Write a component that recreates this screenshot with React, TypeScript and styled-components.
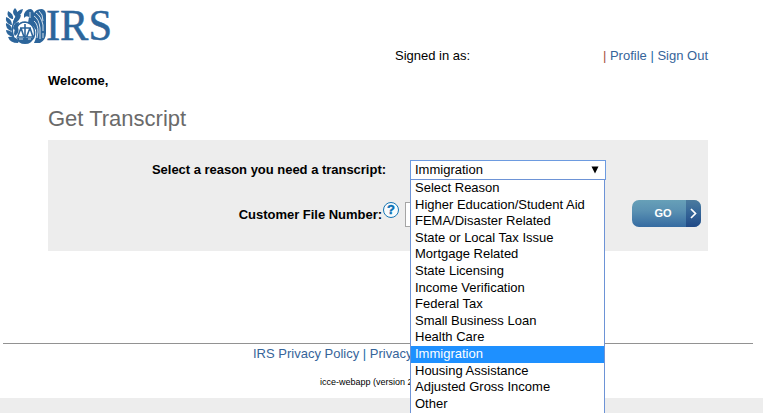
import React from 'react'
import styled, {createGlobalStyle} from 'styled-components'

const GlobalStyle = createGlobalStyle`
    * {
        box-sizing: border-box;
    }

    body {
        margin: 0;
        background: #fff;
        color: #000;
        font: 13px/16px 'Liberation Sans', Arial, sans-serif;
        overflow: hidden;
    }
`

const reasons = [
    'Select Reason',
    'Higher Education/Student Aid',
    'FEMA/Disaster Related',
    'State or Local Tax Issue',
    'Mortgage Related',
    'State Licensing',
    'Income Verification',
    'Federal Tax',
    'Small Business Loan',
    'Health Care',
    'Immigration',
    'Housing Assistance',
    'Adjusted Gross Income',
    'Other',
]

const Page = styled.div`
    display: flex;
    flex-direction: column;
    height: 413px;
`

const Header = styled.header`
    height: 47px;
    padding: 6px 0 0 4px;

    svg {
        display: block;
        overflow: visible;
    }
`

const Main = styled.main`
    width: 660px;
    height: 296px;
    margin-left: 48px;
`

const Account = styled.div`
    display: flex;
    justify-content: space-between;
    height: 26px;
    padding: 1px 0 0 347px;
`

const Link = styled.a`
    color: #36649a;
`

const Divider = styled.span<{$color?: string}>`
    color: ${({$color}) => $color || '#1b6ca8'};
`

const Welcome = styled.div`
    height: 33px;
    font-weight: bold;
`

const Title = styled.h1`
    height: 34px;
    margin: 0;
    color: #6a6a6a;
    font-size: 22px;
    font-weight: normal;
    line-height: 25px;
`

const Panel = styled.form`
    height: 111px;
    padding-top: 19px;
    background: #ededed;
`

const Row = styled.div<{$height: number}>`
    display: flex;
    align-items: flex-start;
    height: ${({$height}) => $height}px;
`

const Label = styled.label<{$width: number; $offset?: number}>`
    width: ${({$width}) => $width}px;
    padding-top: ${({$offset = 3}) => $offset}px;
    font-weight: bold;
    letter-spacing: -0.02px;
    text-align: right;
    white-space: nowrap;
`

const Select = styled.div`
    position: relative;
    width: 196px;
    height: 20px;
    margin: 1px 0 0 24px;
    padding: 1px 6px 0 4px;
    display: flex;
    justify-content: space-between;
    border: 1px solid #6d9be0;
    background: #fff;

    svg {
        margin-top: 4px;
    }
`

const Options = styled.ul`
    position: absolute;
    z-index: 1;
    top: 18px;
    left: -1px;
    width: 195px;
    height: 236px;
    margin: 0;
    padding: 0;
    border: 1px solid #6d93d6;
    border-bottom: 0;
    background: #fff;
    list-style: none;
`

const Option = styled.li<{$selected: boolean}>`
    height: 16.6px;
    padding-left: 4px;
    background: ${({$selected}) => ($selected ? '#1e90ff' : '#fff')};
    color: ${({$selected}) => ($selected ? '#fff' : '#000')};
    line-height: 16.6px;
    white-space: nowrap;
`

const Help = styled.span`
    display: flex;
    align-items: center;
    justify-content: center;
    width: 16px;
    height: 16px;
    margin: 0 6px 0 1px;
    border: 1px solid #1575b5;
    border-radius: 50%;
    background: #f7fbfd;
    color: #0870b5;
    font-size: 13px;
    font-weight: bold;
    -webkit-text-stroke: 0.4px #0870b5;
`

const FileNumber = styled.input`
    width: 150px;
    height: 25px;
    border: 1px solid #a5a5a5;
    background: #fff;
`

const GoButton = styled.button`
    display: flex;
    align-items: center;
    width: 69px;
    height: 27px;
    margin: -2px 7px 0 auto;
    padding: 0;
    overflow: hidden;
    border: 0;
    border-radius: 7px;
    background: linear-gradient(#67a0b8, #5a91b2 40%, #356ba1);
    color: #fff;
    font: bold 11px/27px 'Liberation Sans', Arial, sans-serif;
`

const GoText = styled.span`
    width: 54px;
    padding-left: 8px;
    text-align: center;
`

const GoArrow = styled.span`
    display: flex;
    align-items: center;
    justify-content: center;
    width: 15px;
    height: 27px;
    background: linear-gradient(#4c7b9e, #38699a 40%, #204986);
`

const Footer = styled.footer`
    width: 750px;
    height: 55px;
    margin-left: 3px;
    border-top: 1px solid #929292;
`

const FooterLinks = styled.nav`
    padding: 2px 0 0 250px;
    white-space: nowrap;
`

const Version = styled.div`
    padding: 14px 0 0 317px;
    font-size: 9px;
    line-height: 12px;
    white-space: nowrap;
`

const BottomBar = styled.div`
    flex: 1;
    background: #ededed;
`

const Logo = () => (
    <svg width="120" height="40" viewBox="4 6 120 40" role="img" aria-label="IRS">
        <g fill="#2c659b">
            {/* laurel */}
            <path d="M15 16Q11 12 15 8Q19 12 16 16ZM12 19Q6 17 8 11Q14 14 13 19ZM15 16Q17 10 23 9Q22 15 16 18ZM11 25Q5 23 6 17Q12 19 12 25ZM13 22Q14 16 21 15Q20 21 14 24ZM11 31Q5 28 6 23Q12 25 12 30ZM13 28Q14 22 19 22Q19 27 14 30ZM13 37Q6 35 6 30Q12 30 14 36ZM14 34Q14 28 18 27Q20 33 15 36ZM18 43Q10 43 8 37Q15 36 19 41Z" />
            {/* wing */}
            <path d="M34 13Q36 9 42 9Q46 10 46 15V33Q46 40 40 43H34Q37 37 36 30L31 23Q32 18 34 13Z" />
            {/* head and breast */}
            <path d="M24 14Q26 9 31 9Q35 11 34 17L33 26L28 23L29 17Q26 15 24 18Z" />
            <path d="M17 38H33Q32 44 25 44Q18 44 17 38Z" />
        </g>
        <g fill="none" stroke="#2c659b" strokeWidth="1.6">
            <path d="M15 41Q10 31 14 22Q16 15 21 11" />
            <path d="M17 27Q20 22 25 22Q32 23 34 29Q36 36 32 40M25 24V40M20 28H31M21 28L17.5 37H24L21 28M30 28L26.5 37H33L30 28" />
        </g>
        <g fill="none" stroke="#fff" strokeWidth="0.8">
            <path d="M39 11Q43 14 43 21M36 13Q41 16 43 25V31M34 16Q39 19 40 28V39M34 21Q38 24 38 32L37 38M43 33V38M30 12V18M19 39H23M28 39H31" />
        </g>
        <text
            x="46"
            y="40"
            fill="#2c659b"
            stroke="#2c659b"
            strokeWidth="0.5"
            fontFamily="Liberation Serif, serif"
            fontSize="45"
            textLength="66"
            lengthAdjust="spacingAndGlyphs">
            IRS
        </text>
    </svg>
)

export default function App() {
    const selected = 'Immigration'

    return (
        <>
            <GlobalStyle />
            <Page>
                <Header>
                    <Logo />
                </Header>
                <Main>
                    <Account>
                        <span>Signed in as:</span>
                        <span>
                            <Divider $color="#a8543c">|</Divider> <Link>Profile</Link> <Divider>|</Divider>{' '}
                            <Link>Sign Out</Link>
                        </span>
                    </Account>
                    <Welcome>Welcome,</Welcome>
                    <Title>Get Transcript</Title>
                    <Panel>
                        <Row $height={43}>
                            <Label $width={338}>Select a reason you need a transcript:</Label>
                            <Select>
                                <span>{selected}</span>
                                <svg width="8" height="8" viewBox="0 0 8 8">
                                    <path d="M0.5 0.5H7.5L4 7.5Z" />
                                </svg>
                                <Options>
                                    {reasons.map(reason => (
                                        <Option key={reason} $selected={reason === selected}>
                                            {reason}
                                        </Option>
                                    ))}
                                </Options>
                            </Select>
                        </Row>
                        <Row $height={30}>
                            <Label $width={334} $offset={5}>
                                Customer File Number:
                            </Label>
                            <Help>?</Help>
                            <FileNumber />
                            <GoButton type="button">
                                <GoText>GO</GoText>
                                <GoArrow>
                                    <svg width="7" height="11" viewBox="0 0 7 11">
                                        <path d="M1 1L5.5 5.5L1 10" fill="none" stroke="#fff" strokeWidth="1.7" />
                                    </svg>
                                </GoArrow>
                            </GoButton>
                        </Row>
                    </Panel>
                </Main>
                <Footer>
                    <FooterLinks>
                        <Link>IRS Privacy Policy</Link> <Divider>|</Divider> <Link>Privacy</Link>
                    </FooterLinks>
                    <Version>icce-webapp (version 2</Version>
                </Footer>
                <BottomBar />
            </Page>
        </>
    )
}
